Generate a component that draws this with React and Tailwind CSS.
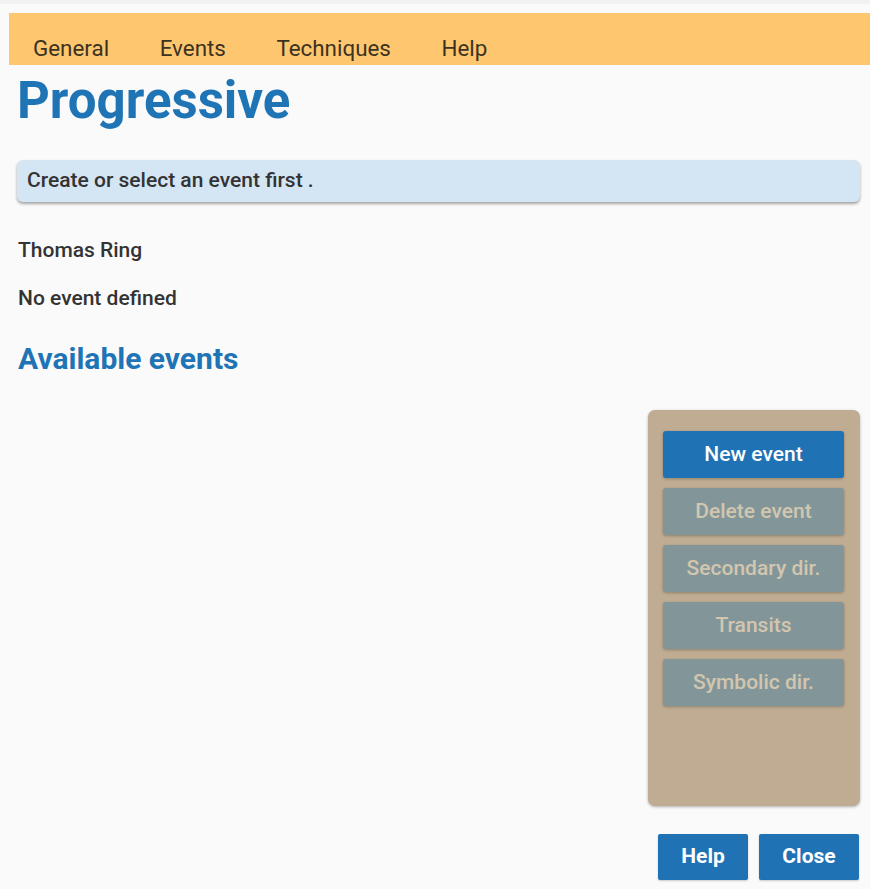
export default function App() {
  const side = [
    { label: "New event", active: true },
    { label: "Delete event" },
    { label: "Secondary dir." },
    { label: "Transits" },
    { label: "Symbolic dir." },
  ];
  return (
    <div className="w-full h-[889px] bg-[#fafafa] overflow-hidden" style={{ fontFamily: "Roboto, 'Noto Sans', sans-serif" }}>
      <div className="h-[4px] bg-[#f2f2f2]" />
      <div className="pl-[9px] pt-[9px]">
        <nav className="h-[52px] bg-[#ffc670] flex items-end pl-[24px] pb-[4px]">
          {["General", "Events", "Techniques", "Help"].map((t) => (
            <span key={t} className="text-[22.4px] leading-[26px] text-[#3b3320] mr-[50.5px]">{t}</span>
          ))}
        </nav>
      </div>
      <div className="pl-[17px] pr-[10px]">
        <h1 className="text-[51px] leading-[60px] font-bold text-[#1f74b5] mt-[6px]">Progressive</h1>
        <div className="mt-[29px] h-[42px] rounded-[6px] bg-[#d4e5f3] shadow-[0_2px_3px_rgba(0,0,0,0.35)] flex items-center pl-[10px] text-[21px] font-medium text-[#333]">
          Create or select an event first .
        </div>
        <div className="mt-[36px] pl-[1px] text-[21px] leading-[25px] font-medium text-[#333]">Thomas Ring</div>
        <div className="mt-[23px] pl-[1px] text-[21px] leading-[25px] font-medium text-[#333]">No event defined</div>
        <h2 className="mt-[30px] pl-[1px] text-[30px] leading-[35px] font-bold text-[#1f74b5]">Available events</h2>
        <div className="flex justify-end mt-[34px]">
          <div className="w-[212px] h-[396px] bg-[#bfac92] rounded-[7px] shadow-[0_1px_3px_rgba(0,0,0,0.3)] pt-[21px] pl-[15px] flex flex-col gap-[10px]">
            {side.map((b) => (
              <div
                key={b.label}
                className={
                  "w-[181px] h-[47px] rounded-[3px] flex items-center justify-center text-[21px] font-medium shadow-[0_1px_3px_rgba(0,0,0,0.25)] " +
                  (b.active ? "bg-[#1f72b4] text-white" : "bg-[#82969a] text-[#d3c6af]")
                }
              >
                {b.label}
              </div>
            ))}
          </div>
        </div>
        <div className="flex justify-end gap-[11px] mt-[28px] mr-[1px]">
          <div className="w-[90px] h-[46px] rounded-[2px] bg-[#1f72b4] text-white text-[21px] font-bold flex items-center justify-center shadow-[0_1px_2px_rgba(0,0,0,0.2)]">Help</div>
          <div className="w-[100px] h-[46px] rounded-[2px] bg-[#1f72b4] text-white text-[21px] font-bold flex items-center justify-center shadow-[0_1px_2px_rgba(0,0,0,0.2)]">Close</div>
        </div>
      </div>
    </div>
  );
}
